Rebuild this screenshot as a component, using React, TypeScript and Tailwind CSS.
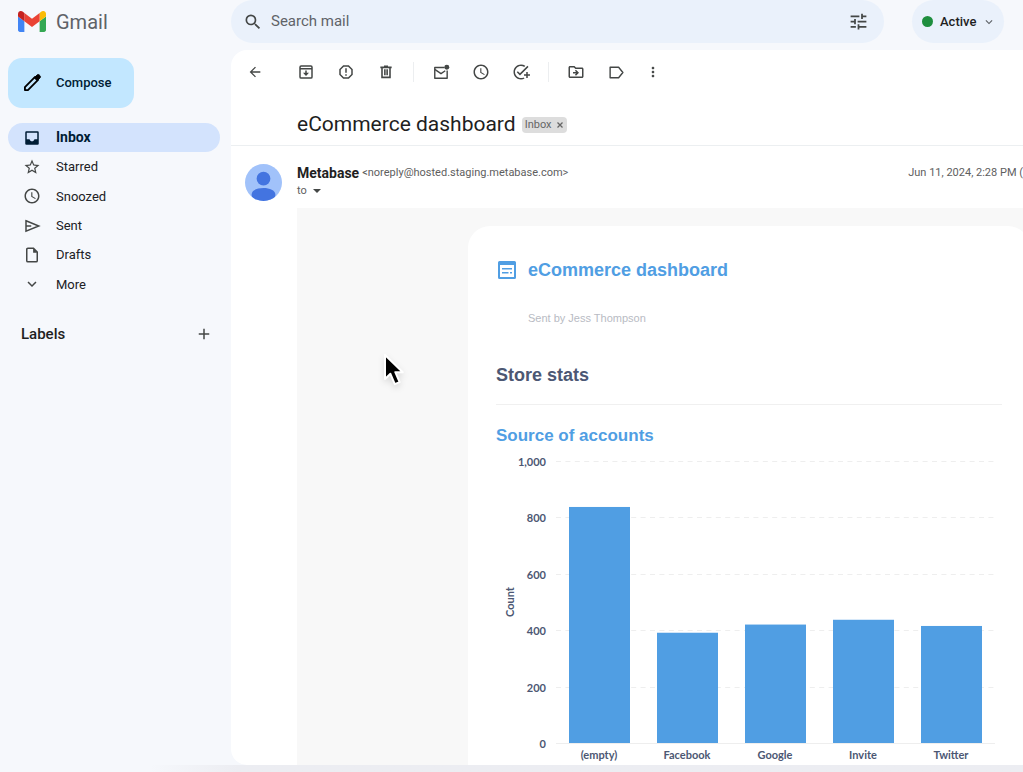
import React from "react";
import {
  MdAdd,
  MdArrowBack,
  MdExpandMore,
  MdMoreVert,
  MdOutlineAddTask,
  MdOutlineDriveFileMove,
  MdReportGmailerrorred,
  MdSchedule,
  MdSearch,
  MdStarBorder,
  MdTune,
} from "react-icons/md";

type IconProps = { className?: string };

function GmailLogo({ className }: IconProps) {
  return (
    <svg viewBox="52 42 88 66" className={className} aria-hidden="true">
      <path fill="#4285f4" d="M58 108h14V74L52 59v43c0 3.32 2.69 6 6 6" />
      <path fill="#34a853" d="M120 108h14c3.32 0 6-2.69 6-6V59l-20 15" />
      <path fill="#fbbc04" d="M120 48v26l20-15v-8c0-7.42-8.47-11.65-14.4-7.2" />
      <path fill="#ea4335" d="M72 74V48l24 18 24-18v26L96 92" />
      <path fill="#c5221f" d="M52 51v8l20 15V48l-5.6-4.2c-5.94-4.45-14.4-.22-14.4 7.2" />
    </svg>
  );
}

function PencilIcon({ className }: IconProps) {
  return (
    <svg viewBox="0 0 24 24" className={className} fill="none" stroke="currentColor" aria-hidden="true">
      <path d="M3.500 20.500v-3.600L15.700 4.700l3.600 3.600L7.100 20.500z" strokeWidth="2.200" strokeLinejoin="round" />
      <path d="M14.600 5.800l3.400-3.400c.8-.8 2-.8 2.800 0l.8.8c.8.8.8 2 0 2.800l-3.400 3.400z" fill="currentColor" strokeWidth="1" />
    </svg>
  );
}

function InboxIcon({ className }: IconProps) {
  return (
    <svg viewBox="0 0 24 24" className={className} aria-hidden="true">
      <path
        fill="currentColor"
        fillRule="evenodd"
        d="M4.500 3h15A1.500 1.500 0 0 1 21 4.500v15a1.500 1.500 0 0 1-1.500 1.500h-15A1.500 1.500 0 0 1 3 19.500v-15A1.500 1.500 0 0 1 4.500 3zM5 5v8.500h3.700c.5 1.700 1.700 2.700 3.300 2.700s2.800-1 3.300-2.700H19V5z"
      />
    </svg>
  );
}

function SentIcon({ className }: IconProps) {
  return (
    <svg viewBox="0 0 24 24" className={className} fill="none" stroke="currentColor" strokeWidth="2" aria-hidden="true">
      <path d="M4 5l17 7-17 7z" />
      <path d="M4 12h7" />
    </svg>
  );
}

function DraftIcon({ className }: IconProps) {
  return (
    <svg viewBox="0 0 24 24" className={className} fill="none" stroke="currentColor" strokeWidth="2" aria-hidden="true">
      <path d="M14 3H6.500A1.500 1.500 0 0 0 5 4.500v15A1.500 1.500 0 0 0 6.500 21h11a1.500 1.500 0 0 0 1.500-1.500V8z" />
      <path d="M13.500 3v6H19z" fill="currentColor" stroke="none" />
    </svg>
  );
}

function ArchiveIcon({ className }: IconProps) {
  return (
    <svg viewBox="0 0 24 24" className={className} fill="none" stroke="currentColor" strokeWidth="2" aria-hidden="true">
      <rect x="4" y="4" width="16" height="16" rx="1.500" />
      <path d="M4 7.500h16M12 10v6" />
      <path d="M8 13h8l-4 4.200z" fill="currentColor" stroke="none" />
    </svg>
  );
}

function TrashIcon({ className }: IconProps) {
  return (
    <svg viewBox="0 0 24 24" className={className} fill="none" stroke="currentColor" strokeWidth="2.400" aria-hidden="true">
      <path d="M3.500 5h17M9 3.500h6M6 5v15h12V5M10.300 8v9M13.700 8v9" />
    </svg>
  );
}

function UnreadIcon({ className }: IconProps) {
  return (
    <svg viewBox="0 0 24 24" className={className} fill="none" stroke="currentColor" strokeWidth="2" aria-hidden="true">
      <path d="M16 5H2.500v15H20V9" strokeLinejoin="round" />
      <path d="M2.500 7.500l8.800 6 6-4" />
      <circle cx="19.500" cy="4.500" r="3.500" fill="currentColor" stroke="none" />
    </svg>
  );
}

function LabelIcon({ className }: IconProps) {
  return (
    <svg viewBox="0 0 24 24" className={className} fill="none" stroke="currentColor" strokeWidth="2" aria-hidden="true">
      <path d="M3 4.500h12L21 12l-6 7.500H3z" strokeLinejoin="round" />
    </svg>
  );
}

function DashboardIcon({ className }: IconProps) {
  return (
    <svg viewBox="0 0 18 18" className={className} aria-hidden="true">
      <path
        fill="currentColor"
        fillRule="evenodd"
        d="M1.500 0h15A1.500 1.500 0 0 1 18 1.500v15a1.500 1.500 0 0 1-1.500 1.500h-15A1.500 1.500 0 0 1 0 16.500v-15A1.500 1.500 0 0 1 1.500 0zM2 4v12h14V4z"
      />
      <path fill="currentColor" d="M4 7h10v1.600H4zM4 11h6.500v1.600H4zM12 11h2v1.600h-2z" />
    </svg>
  );
}

function Avatar({ className }: IconProps) {
  return (
    <svg viewBox="0 0 36 36" className={className} aria-hidden="true">
      <clipPath id="avatar-circle">
        <circle cx="18" cy="18" r="18" />
      </clipPath>
      <g clipPath="url(#avatar-circle)">
        <rect width="36" height="36" fill="#a1c2fa" />
        <circle cx="18" cy="14.300" r="6.700" fill="#4374e0" />
        <path fill="#4374e0" d="M6.500 29.500c0-4 5.500-6.200 11.500-6.200s11.500 2.200 11.500 6.200V33c-3 2.300-7 3.500-11.500 3.500S9 35.300 6.500 33z" />
      </g>
    </svg>
  );
}

function Pointer({ className }: IconProps) {
  return (
    <svg viewBox="0 0 24 36" className={className} aria-hidden="true">
      <path
        d="M3 3v24l5.400-5.200 4.400 10.400 4.800-2-4.300-10h7.500z"
        fill="#000"
        stroke="#fff"
        strokeWidth="2"
        strokeLinejoin="round"
      />
    </svg>
  );
}

const folders = [
  { name: "Inbox", icon: InboxIcon, active: true },
  { name: "Starred", icon: MdStarBorder },
  { name: "Snoozed", icon: MdSchedule },
  { name: "Sent", icon: SentIcon },
  { name: "Drafts", icon: DraftIcon },
  { name: "More", icon: MdExpandMore },
];

function Sidebar() {
  return (
    <aside className="w-[231px] shrink-0 pl-2 pt-2">
      <button className="flex h-[50px] w-[126px] items-center rounded-[14px] bg-[#c2e7ff] pl-[14px] text-[13px] font-medium text-[#001d35]">
        <PencilIcon className="mr-[14px] size-5 text-black" />
        Compose
      </button>
      <nav className="mr-[11px] mt-[15px] flex h-[176px] flex-col justify-between">
        {folders.map(({ name, icon: Icon, active }) => (
          <a
            key={name}
            href="#"
            className={
              active
                ? "flex h-[29px] items-center rounded-full bg-[#d3e3fd] pl-[15px] text-[14px] font-bold text-[#001d35]"
                : "flex h-[29px] items-center rounded-full pl-[15px] text-[13px] text-[#202124]"
            }
          >
            <Icon className={active ? "mr-[15px] size-[18px]" : "mr-[15px] size-[18px] text-[#444746]"} />
            {name}
          </a>
        ))}
      </nav>
      <div className="mr-[18px] mt-[23px] flex h-6 items-center justify-between pl-[13px]">
        <h2 className="text-[15px] font-medium text-[#1f1f1f]">Labels</h2>
        <button aria-label="Create new label" className="text-[#444746]">
          <MdAdd className="size-[18px]" />
        </button>
      </div>
    </aside>
  );
}

function Header() {
  return (
    <header className="flex h-[50px] shrink-0 items-start pr-[19px]">
      <a href="#" className="flex h-[43px] w-[231px] shrink-0 items-center gap-[10px] pl-[18px] text-[20px] text-[#5f6368]">
        <GmailLogo className="h-[21px] w-7" />
        Gmail
      </a>
      <form className="mr-7 flex h-[43px] min-w-0 flex-1 items-center rounded-full bg-[#eaf1fb] pl-3 pr-[15px] text-[#444746]">
        <button type="button" aria-label="Search">
          <MdSearch className="size-5" />
        </button>
        <input
          type="text"
          aria-label="Search mail"
          placeholder="Search mail"
          className="ml-2 min-w-0 flex-1 bg-transparent text-[15px] outline-none placeholder:text-[#5f6368]"
        />
        <button type="button" aria-label="Show search options">
          <MdTune className="size-[21px]" />
        </button>
      </form>
      <button className="flex h-[43px] w-[92px] items-center rounded-full bg-[#eaf1fb] pl-[10px] text-[13px] font-medium text-[#1f1f1f]">
        <span className="mr-[7px] size-[11px] rounded-full bg-[#1e8e3e]" />
        Active
        <MdExpandMore className="ml-[6px] size-[14px] text-[#5f6368]" />
      </button>
    </header>
  );
}

function ToolButton({ label, children }: { label: string; children: React.ReactNode }) {
  return (
    <button aria-label={label} className="flex size-10 shrink-0 items-center justify-center">
      {children}
    </button>
  );
}

function Toolbar() {
  return (
    <div className="flex h-11 items-center pl-1 text-[#444746]">
      <ToolButton label="Back to Inbox">
        <MdArrowBack className="size-4" />
      </ToolButton>
      <div className="ml-[11px] flex items-center">
        <ToolButton label="Archive">
          <ArchiveIcon className="size-[18px]" />
        </ToolButton>
        <ToolButton label="Report spam">
          <MdReportGmailerrorred className="size-[18px]" />
        </ToolButton>
        <ToolButton label="Delete">
          <TrashIcon className="size-4" />
        </ToolButton>
      </div>
      <span className="mx-[7px] h-5 w-px bg-[#eceef0]" />
      <ToolButton label="Mark as unread">
        <UnreadIcon className="size-[17px]" />
      </ToolButton>
      <ToolButton label="Snooze">
        <MdSchedule className="size-[18px]" />
      </ToolButton>
      <ToolButton label="Add to Tasks">
        <MdOutlineAddTask className="size-[18px]" />
      </ToolButton>
      <span className="mx-[7px] h-5 w-px bg-[#eceef0]" />
      <ToolButton label="Move to">
        <MdOutlineDriveFileMove className="size-[18px]" />
      </ToolButton>
      <ToolButton label="Labels">
        <LabelIcon className="size-[17px]" />
      </ToolButton>
      <button aria-label="More" className="flex h-10 w-[34px] items-center justify-center">
        <MdMoreVert className="size-4" />
      </button>
    </div>
  );
}

const accounts = [
  { source: "(empty)", count: 837 },
  { source: "Facebook", count: 391 },
  { source: "Google", count: 420 },
  { source: "Invite", count: 437 },
  { source: "Twitter", count: 415 },
];

const ticks = [
  { value: 1000, label: "1,000" },
  { value: 800, label: "800" },
  { value: 600, label: "600" },
  { value: 400, label: "400" },
  { value: 200, label: "200" },
  { value: 0, label: "0" },
];

const BASE = 293;
const scale = (value: number) => (value * 282) / 1000;

function AccountsChart() {
  return (
    <svg
      viewBox="0 0 506 340"
      className="block w-full font-['Lato',sans-serif] text-[11px] font-bold"
      fill="#4c5773"
      role="img"
      aria-label="Source of accounts"
    >
      {ticks.map(({ value, label }) => {
        const y = BASE - Math.round(scale(value));
        return (
          <g key={value}>
            <line
              x1="60"
              x2="499"
              y1={y + 0.5}
              y2={y + 0.5}
              stroke="#eeeeee"
              strokeDasharray={value === 0 ? undefined : "5 4.400"}
            />
            <text x="50" y={y + 5} textAnchor="end">
              {label}
            </text>
          </g>
        );
      })}
      {accounts.map(({ source, count }, index) => {
        const x = 73 + index * 88;
        return (
          <g key={source}>
            <rect x={x} y={BASE - scale(count)} width="61" height={scale(count)} fill="#509ee3" />
            <text x={x + 30} y={BASE + 16} textAnchor="middle">
              {source}
            </text>
          </g>
        );
      })}
      <text transform="translate(18 152) rotate(-90)" textAnchor="middle">
        Count
      </text>
    </svg>
  );
}

function DashboardCard() {
  return (
    <article className="ml-[171px] w-[562px] shrink-0 rounded-t-[22px] bg-white px-7 pt-8 font-['Liberation_Sans',sans-serif]">
      <h2 className="flex h-6 items-center text-[18px] font-bold text-[#509ee3]">
        <DashboardIcon className="ml-[2px] mr-3 size-[18px]" />
        eCommerce dashboard
      </h2>
      <p className="ml-8 mt-7 text-[11px] leading-4 text-[#b8bbc3]">Sent by Jess Thompson</p>
      <h3 className="mt-[37px] border-b border-[#f0f0f0] pb-[17px] text-[18px] font-bold leading-6 text-[#4c5773]">
        Store stats
      </h3>
      <h4 className="mt-5 text-[17px] font-bold leading-[22px] text-[#509ee3]">Source of accounts</h4>
      <div className="mt-[3px]">
        <AccountsChart />
      </div>
    </article>
  );
}

function Message() {
  return (
    <main className="flex min-w-0 flex-1 flex-col overflow-hidden rounded-bl-2xl rounded-tl-2xl bg-white">
      <Toolbar />
      <div className="flex h-[52px] shrink-0 items-center border-b border-[#eceff1] pl-[66px] pt-[11px]">
        <h1 className="text-[21px] text-[#1f1f1f]">eCommerce dashboard</h1>
        <span className="ml-[6px] flex h-4 items-center gap-1 rounded bg-[#dddddd] px-[3px] text-[11px] text-[#666666]">
          Inbox
          <button aria-label="Remove label Inbox" className="flex items-center">
            <svg viewBox="0 0 8 8" className="size-2" stroke="currentColor" strokeWidth="1.300" aria-hidden="true">
              <path d="M1.500 1.500l5 5M6.500 1.500l-5 5" />
            </svg>
          </button>
        </span>
      </div>
      <div className="flex min-h-0 flex-1 pl-[14px] pt-[18px]">
        <Avatar className="mr-[15px] size-[37px] shrink-0" />
        <div className="flex min-w-0 flex-1 flex-col">
          <div className="flex h-[18px] shrink-0 items-center justify-between">
            <p className="flex items-center gap-[3px] text-[11px] text-[#5e5e5e]">
              <span className="text-[14px] font-bold text-[#1f1f1f]">Metabase</span>
              &lt;noreply@hosted.staging.metabase.com&gt;
            </p>
            <time className="whitespace-nowrap text-[11px] text-[#5e5e5e]">Jun 11, 2024, 2:28 PM (</time>
          </div>
          <button className="flex h-[18px] shrink-0 items-center gap-[6px] text-[11px] text-[#5e5e5e]">
            to
            <svg viewBox="0 0 8 4" className="h-1 w-2" fill="#444746" aria-hidden="true">
              <path d="M0 0h8L4 4z" />
            </svg>
          </button>
          <div className="mt-2 flex min-h-0 flex-1 overflow-hidden bg-[#f8f8f8] pt-[18px]">
            <DashboardCard />
          </div>
        </div>
      </div>
    </main>
  );
}

export default function App() {
  return (
    <div className="relative flex h-screen flex-col overflow-hidden bg-[#f6f8fc] pb-[7px] font-['Roboto','Liberation_Sans',sans-serif]">
      <Header />
      <div className="flex min-h-0 flex-1">
        <Sidebar />
        <Message />
      </div>
      <div className="pointer-events-none absolute bottom-0 left-[150px] right-0 h-[7px] bg-linear-to-r from-transparent to-[#ecedf2] to-10%" />
      <Pointer className="pointer-events-none absolute left-[382px] top-[352px] h-9 w-6 drop-shadow-md" />
    </div>
  );
}
